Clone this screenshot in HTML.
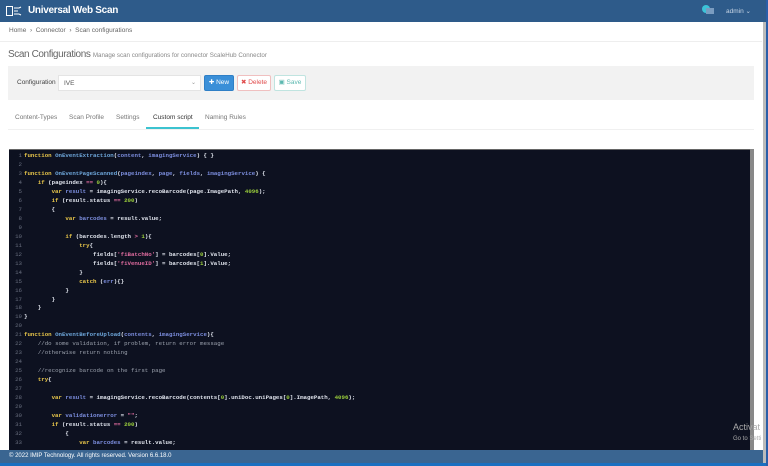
<!DOCTYPE html>
<html><head><meta charset="utf-8"><style>
*{margin:0;padding:0;box-sizing:border-box}
body{width:768px;height:466px;overflow:hidden;background:#fff;font-family:"Liberation Sans",sans-serif;position:relative;color:#555}
.hdr{position:absolute;left:0;top:0;width:766px;height:22px;background:#2e5b8a;color:#fff}
.hdr .t{position:absolute;left:28px;top:5px;font-size:10px;font-weight:bold;letter-spacing:-.3px}
.hdr .ic{position:absolute;left:6px;top:6px}
.adm{position:absolute;left:726px;top:7px;font-size:6.5px;color:#c8d6e6}
.badge{position:absolute;left:702px;top:5px;width:8px;height:8px;border-radius:50%;background:#3cc3d8}
.badge2{position:absolute;left:706px;top:8px;width:8px;height:6px;background:#7a9cc0}
.bc{position:absolute;left:9px;top:27px;font-size:6.5px;color:#666}
.line{position:absolute;left:0;top:41px;width:762px;height:1px;background:#eee}
.title{position:absolute;left:8px;top:49px;font-size:10px;color:#666;letter-spacing:-.4px}
.title small{font-size:6.2px;color:#888;letter-spacing:0}
.panel{position:absolute;left:8px;top:66px;width:746px;height:34px;background:#f2f2f2}
.lbl{position:absolute;left:17px;top:79px;font-size:6.5px;color:#444}
.sel{position:absolute;left:58px;top:75px;width:143px;height:16px;background:#fff;border:1px solid #e4e4e4;font-size:6.5px;padding:4px 5px;color:#555}
.sel i{position:absolute;right:4px;top:3px;font-style:normal;font-size:6px;color:#999}
.btn{position:absolute;top:75px;height:16px;font-size:6.5px;text-align:center;line-height:14px;border-radius:2px}
.tabs{position:absolute;top:114px;font-size:6.5px;color:#777}
.ul{position:absolute;left:146px;top:127px;width:53px;height:2px;background:#3cc3d0}
.tline{position:absolute;left:8px;top:129px;width:746px;height:1px;background:#f0f0f0}
.ed{position:absolute;left:9px;top:149px;width:744px;height:301px;background:#0d1120;border-top:1px solid #666;overflow:hidden}
.sb{position:absolute;left:750px;top:149px;width:4px;height:301px;background:#888}
pre{position:absolute;left:0;top:2px;font-family:"Liberation Mono",monospace;font-size:5.75px;line-height:8.97px;color:#dfe3ec;font-weight:bold}
.n{display:inline-block;width:13px;text-align:right;color:#6a7080;font-weight:normal;margin-right:2px}
.k{color:#e8c64a}.f{color:#6fa8dc}.v{color:#7d8fe0}.s{color:#e06c9f}.d{color:#9bcf3c}.c{color:#9aa0ac;font-weight:normal}
.ft{position:absolute;left:0;top:450px;width:763px;height:13px;background:#3a6591;color:#fff;font-size:6px;padding:3px 9px}
.bot{position:absolute;left:0;top:463px;width:768px;height:3px;background:#1a6fc0}
.psb{position:absolute;left:763px;top:22px;width:3px;height:441px;background:#bbb}
.pb{position:absolute;left:766px;top:0;width:2px;height:466px;background:#2a5ea8}
.act{position:absolute;left:733px;top:422px;font-size:9px;color:#aaa}
.act2{position:absolute;left:733px;top:436px;font-size:6px;color:#aaa}
</style></head><body>
<div class="hdr"><svg class="ic" width="16" height="10" viewBox="0 0 16 10"><rect x="0.5" y="0.5" width="6" height="9" fill="none" stroke="#fff"/><path d="M8 2h5M8 5h4M8 8h5M13 2l2-1M13 8l2 1" stroke="#fff" stroke-width="1"/></svg><span class="t">Universal Web Scan</span><div class="badge"></div><div class="badge2"></div><span class="adm">admin ⌄</span></div>
<div class="bc">Home &nbsp;›&nbsp; Connector &nbsp;›&nbsp; Scan configurations</div>
<div class="line"></div>
<div class="title">Scan Configurations <small>Manage scan configurations for connector ScaleHub Connector</small></div>
<div class="panel"></div>
<div class="lbl">Configuration</div>
<div class="sel">IVE<i>⌄</i></div>
<div class="btn" style="left:204px;width:30px;background:#3a8fd8;color:#fff;border:1px solid #2f7fc6">✚ New</div>
<div class="btn" style="left:237px;width:34px;background:#fff;color:#e04b4b;border:1px solid #f0c0c0">✖ Delete</div>
<div class="btn" style="left:274px;width:32px;background:#fff;color:#5cb8b0;border:1px solid #c0e4e0">▣ Save</div>
<div class="tabs" style="left:15px">Content-Types</div>
<div class="tabs" style="left:69px">Scan Profile</div>
<div class="tabs" style="left:116px">Settings</div>
<div class="tabs" style="left:153px;color:#333">Custom script</div>
<div class="tabs" style="left:205px">Naming Rules</div>
<div class="ul"></div><div class="tline"></div>
<div class="ed"><pre><span class="n">1</span><span class="k">function</span> <span class="f">OnEventExtraction</span>(<span class="v">content</span>, <span class="v">imagingService</span>) { }
<span class="n">2</span>
<span class="n">3</span><span class="k">function</span> <span class="f">OnEventPageScanned</span>(<span class="v">pageindex</span>, <span class="v">page</span>, <span class="v">fields</span>, <span class="v">imagingService</span>) {
<span class="n">4</span>    <span class="k">if</span> (pageindex <span class="s">==</span> <span class="d">0</span>){
<span class="n">5</span>        <span class="k">var</span> <span class="v">result</span> = imagingService.recoBarcode(page.ImagePath, <span class="d">4096</span>);
<span class="n">6</span>        <span class="k">if</span> (result.status <span class="s">==</span> <span class="d">200</span>)
<span class="n">7</span>        {
<span class="n">8</span>            <span class="k">var</span> <span class="v">barcodes</span> = result.value;
<span class="n">9</span>
<span class="n">10</span>            <span class="k">if</span> (barcodes.length <span class="s">&gt;</span> <span class="d">1</span>){
<span class="n">11</span>                <span class="k">try</span>{
<span class="n">12</span>                    fields[<span class="s">'fiBatchNo'</span>] = barcodes[<span class="d">0</span>].Value;
<span class="n">13</span>                    fields[<span class="s">'fiVenueID'</span>] = barcodes[<span class="d">1</span>].Value;
<span class="n">14</span>                }
<span class="n">15</span>                <span class="k">catch</span> (<span class="v">err</span>){}
<span class="n">16</span>            }
<span class="n">17</span>        }
<span class="n">18</span>    }
<span class="n">19</span>}
<span class="n">20</span>
<span class="n">21</span><span class="k">function</span> <span class="f">OnEventBeforeUpload</span>(<span class="v">contents</span>, <span class="v">imagingService</span>){
<span class="n">22</span>    <span class="c">//do some validation, if problem, return error message</span>
<span class="n">23</span>    <span class="c">//otherwise return nothing</span>
<span class="n">24</span>
<span class="n">25</span>    <span class="c">//recognize barcode on the first page</span>
<span class="n">26</span>    <span class="k">try</span>{
<span class="n">27</span>
<span class="n">28</span>        <span class="k">var</span> <span class="v">result</span> = imagingService.recoBarcode(contents[<span class="d">0</span>].uniDoc.uniPages[<span class="d">0</span>].ImagePath, <span class="d">4096</span>);
<span class="n">29</span>
<span class="n">30</span>        <span class="k">var</span> <span class="v">validationerror</span> = <span class="s">""</span>;
<span class="n">31</span>        <span class="k">if</span> (result.status <span class="s">==</span> <span class="d">200</span>)
<span class="n">32</span>            {
<span class="n">33</span>                <span class="k">var</span> <span class="v">barcodes</span> = result.value;
</pre></div>
<div class="sb"></div>
<div class="act">Activat</div><div class="act2">Go to Setti</div>
<div class="psb"></div>
<div class="ft">© 2022 IMIP Technology. All rights reserved. Version 6.6.18.0</div>
<div class="bot"></div><div class="pb"></div>
</body></html>
